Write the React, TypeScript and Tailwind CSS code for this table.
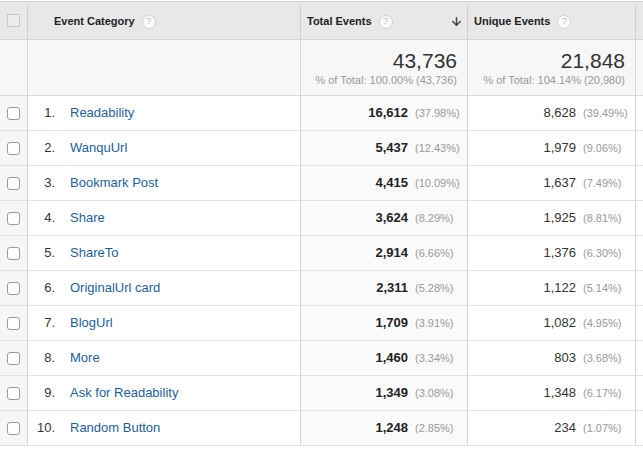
import { ArrowDown } from 'lucide-react'

interface Row {
  n: number
  name: string
  total: string
  totalPct: string
  unique: string
  uniquePct: string
}

const rows: Row[] = [
  { n: 1, name: 'Readability', total: '16,612', totalPct: '(37.98%)', unique: '8,628', uniquePct: '(39.49%)' },
  { n: 2, name: 'WanquUrl', total: '5,437', totalPct: '(12.43%)', unique: '1,979', uniquePct: '(9.06%)' },
  { n: 3, name: 'Bookmark Post', total: '4,415', totalPct: '(10.09%)', unique: '1,637', uniquePct: '(7.49%)' },
  { n: 4, name: 'Share', total: '3,624', totalPct: '(8.29%)', unique: '1,925', uniquePct: '(8.81%)' },
  { n: 5, name: 'ShareTo', total: '2,914', totalPct: '(6.66%)', unique: '1,376', uniquePct: '(6.30%)' },
  { n: 6, name: 'OriginalUrl card', total: '2,311', totalPct: '(5.28%)', unique: '1,122', uniquePct: '(5.14%)' },
  { n: 7, name: 'BlogUrl', total: '1,709', totalPct: '(3.91%)', unique: '1,082', uniquePct: '(4.95%)' },
  { n: 8, name: 'More', total: '1,460', totalPct: '(3.34%)', unique: '803', uniquePct: '(3.68%)' },
  { n: 9, name: 'Ask for Readability', total: '1,349', totalPct: '(3.08%)', unique: '1,348', uniquePct: '(6.17%)' },
  { n: 10, name: 'Random Button', total: '1,248', totalPct: '(2.85%)', unique: '234', uniquePct: '(1.07%)' },
]

function Help() {
  return (
    <span className="ml-[7px] inline-flex h-[14px] w-[14px] items-center justify-center rounded-full border border-[#d2d2d2] bg-[#fbfbfb] text-[9px] font-normal leading-none text-[#b8b8b8]">
      ?
    </span>
  )
}

export default function App() {
  return (
    <div className="h-[453px] w-[643px] overflow-hidden bg-white pt-px text-[#222]" style={{ fontFamily: '"Liberation Sans", Arial, sans-serif' }}>
      {/* Header */}
      <div className="flex h-[39px] border-y border-[#d4d4d4] bg-[#e8e8e8] pt-[2px] text-[11px] font-bold">
        <div className="flex w-[28px] shrink-0 items-center border-r border-[#cfcfcf] pb-[2px] pl-[7px]">
          <span className="h-[13px] w-[13px] border border-[#c8c8c8] bg-[#ececec]" />
        </div>
        <div className="flex w-[273px] shrink-0 items-center border-r border-[#cfcfcf] pl-[26px]">
          Event Category
          <Help />
        </div>
        <div className="flex w-[167px] shrink-0 items-center border-r border-[#cfcfcf] pl-[6px] pr-[4px]">
          Total Events
          <Help />
          <ArrowDown className="ml-auto h-[13px] w-[13px] text-[#444]" strokeWidth={2.75} />
        </div>
        <div className="flex w-[168px] shrink-0 items-center border-r border-[#cfcfcf] pl-[6px]">
          Unique Events
          <Help />
        </div>
        <div className="flex-1" />
      </div>

      {/* Totals */}
      <div className="flex h-[56px] border-b border-[#d8d8d8] bg-[#f7f7f7]">
        <div className="w-[28px] shrink-0 border-r border-[#d4d4d4]" />
        <div className="w-[273px] shrink-0 border-r border-[#d4d4d4]" />
        <div className="flex w-[167px] shrink-0 flex-col items-end justify-end border-r border-[#d4d4d4] pb-[8px] pr-[10px]">
          <div className="text-[21px] leading-[24px] text-[#333]">43,736</div>
          <div className="text-[11px] leading-[14px] text-[#999]">% of Total: 100.00% (43,736)</div>
        </div>
        <div className="flex w-[168px] shrink-0 flex-col items-end justify-end border-r border-[#d4d4d4] pb-[8px] pr-[10px]">
          <div className="text-[21px] leading-[24px] text-[#333]">21,848</div>
          <div className="text-[11px] leading-[14px] text-[#999]">% of Total: 104.14% (20,980)</div>
        </div>
        <div className="flex-1" />
      </div>

      {/* Rows */}
      {rows.map((r) => (
        <div key={r.n} className="flex h-[35px] border-b border-[#e2e2e2] text-[13px]">
          <div className="flex w-[28px] shrink-0 items-center border-r border-[#d4d4d4] bg-[#f6f6f6] pl-[7px]">
            <span className="h-[13px] w-[13px] rounded-[3px] border border-[#9a9a9a] bg-white" />
          </div>
          <div className="flex w-[273px] shrink-0 items-center border-r border-[#d4d4d4]">
            <span className="w-[27px] text-right text-[#333]">{r.n}.</span>
            <span className="ml-[15px] text-[#1d5f9e]">{r.name}</span>
          </div>
          <div className="flex w-[167px] shrink-0 items-center justify-end border-r border-[#d4d4d4] bg-[#fafafa] pr-[9px]">
            <span className="font-bold">{r.total}</span>
            <span className="ml-[7px] w-[43px] text-[11px] text-[#999]">{r.totalPct}</span>
          </div>
          <div className="flex w-[168px] shrink-0 items-center justify-end border-r border-[#d4d4d4] pr-[9px]">
            <span className="text-[#333]">{r.unique}</span>
            <span className="ml-[7px] w-[43px] text-[11px] text-[#999]">{r.uniquePct}</span>
          </div>
          <div className="flex-1" />
        </div>
      ))}
    </div>
  )
}
